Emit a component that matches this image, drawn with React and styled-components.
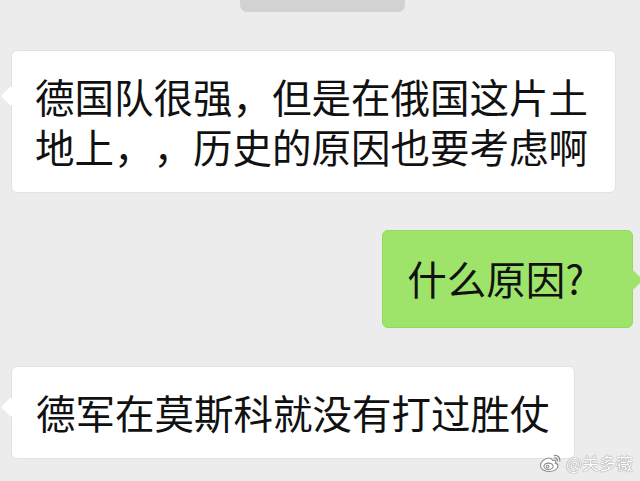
import React from 'react'
import styled, { createGlobalStyle } from 'styled-components'

const GlobalStyle = createGlobalStyle`
  html, body {
    margin: 0;
    padding: 0;
    background: #ececec;
  }
  body {
    font-family: "Noto Sans CJK SC", "Noto Sans", sans-serif;
  }
`

const Screen = styled.div`
  position: relative;
  width: 640px;
  height: 481px;
  overflow: hidden;
  background: #ececec;
  display: flex;
  flex-direction: column;
`

const TimePill = styled.div`
  align-self: center;
  width: 165px;
  height: 12px;
  margin-left: 4px;
  background: #d2d2d2;
  border-radius: 0 0 7px 7px;
`

const Row = styled.div`
  display: flex;
  justify-content: ${p => (p.$mine ? 'flex-end' : 'flex-start')};
  margin-top: ${p => p.$gap}px;
  padding: ${p => (p.$mine ? '0 7px 0 0' : '0 0 0 11px')};
`

const Bubble = styled.div`
  position: relative;
  font-size: 39.5px;
  line-height: 50px;
  color: #111;
  white-space: nowrap;
  text-spacing-trim: space-all;
  font-kerning: none;
  border-radius: 6px;
  background: ${p => (p.$mine ? '#9ee46b' : '#ffffff')};
  border: 1px solid ${p => (p.$mine ? '#93d862' : '#e2e2e2')};
  padding: ${p => p.$pad};

  &::before {
    content: '';
    position: absolute;
    top: ${p => p.$tail}px;
    ${p => (p.$mine ? 'right: -8px;' : 'left: -8px;')}
    width: 14px;
    height: 14px;
    background: inherit;
    transform: rotate(45deg);
    border-radius: 2px;
  }
`

const Watermark = styled.div`
  position: absolute;
  right: 7px;
  bottom: 6px;
  display: flex;
  align-items: center;
  gap: 3px;
  color: #fff;
  font-size: 17px;
  text-shadow: 0 0 1px #8a8a8a, 0 0 1px #8a8a8a;
`

const WeiboIcon = () => (
  <svg width="24" height="20" viewBox="0 0 24 20">
    <g fill="#fff" stroke="#8c8c8c" strokeWidth="1.1">
      <path d="M10 5c-4 0-8.5 4-8.5 7.5C1.5 16 5 18.5 10 18.5s9-2.5 9-5.5c0-2-1.5-2.6-2.6-2.9.8-1.6.6-3.4-2-2.6C13 8 13.6 5 10 5z" />
      <ellipse cx="9.5" cy="13.3" rx="4.6" ry="3.2" />
      <circle cx="8.6" cy="13.6" r="1.4" />
    </g>
    <g fill="none" stroke="#8c8c8c" strokeWidth="1.3" strokeLinecap="round">
      <path d="M15.5 2.5c3 -0.6 6 2 5.3 5.5" />
      <path d="M15.8 5c1.6-.3 2.9 1 2.6 2.6" />
    </g>
  </svg>
)

export default function App() {
  return (
    <Screen>
      <GlobalStyle />
      <TimePill />
      <Row $gap={38}>
        <Bubble $pad="20px 27px 21px 23px" $tail={38}>
          德国队很强，但是在俄国这片土
          <br />
          地上，，历史的原因也要考虑啊
        </Bubble>
      </Row>
      <Row $mine $gap={37}>
        <Bubble $mine $pad="22px 48px 24px 24px" $tail={42}>
          什么原因?
        </Bubble>
      </Row>
      <Row $gap={38}>
        <Bubble $pad="20px 24px 21px 24px" $tail={33}>
          德军在莫斯科就没有打过胜仗
        </Bubble>
      </Row>
      <Watermark>
        <WeiboIcon />
        <span>@关多薇</span>
      </Watermark>
    </Screen>
  )
}
